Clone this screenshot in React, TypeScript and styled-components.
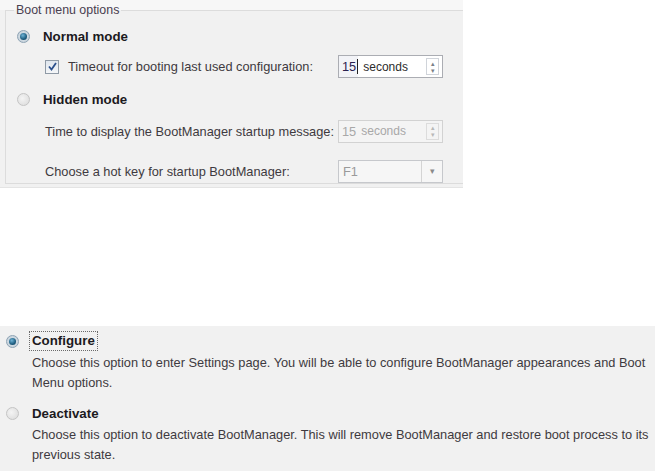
import styled, { createGlobalStyle } from "styled-components";

const GlobalStyle = createGlobalStyle`
  * {
    box-sizing: border-box;
  }
  body {
    margin: 0;
    background: #ffffff;
    font-family: "Liberation Sans", Arial, sans-serif;
    color: #3c3c3c;
  }
`;

function Radio({ checked }: { checked?: boolean }) {
  return (
    <RadioOuter $checked={checked}>
      {checked && <RadioDot />}
    </RadioOuter>
  );
}

function Check() {
  return (
    <CheckBox>
      <svg width="11" height="11" viewBox="0 0 11 11">
        <path d="M2 5.5 L4.5 8.5 L9 2" fill="none" stroke="#2a4f8c" strokeWidth="1.8" />
      </svg>
    </CheckBox>
  );
}

function Spin({ value, disabled }: { value: string; disabled?: boolean }) {
  return (
    <SpinBox $disabled={disabled}>
      <SpinNumber $disabled={disabled}>
        {value}
        {!disabled && <Caret />}
      </SpinNumber>
      <SpinUnit $disabled={disabled}>seconds</SpinUnit>
      <SpinArrows $disabled={disabled}>
        <span>▴</span>
        <span>▾</span>
      </SpinArrows>
    </SpinBox>
  );
}

function App() {
  return (
    <Page>
      <GlobalStyle />
      <TopPanel>
        <Group>
          <Legend>Boot menu options</Legend>
          <Row $top={11} $indent={3}>
            <Radio checked />
            <Heading>Normal mode</Heading>
          </Row>
          <Row $top={8} $indent={31} $tall>
            <Check />
            <Label $width={270}>Timeout for booting last used configuration:</Label>
            <Spin value="15" />
          </Row>
          <Row $top={11} $indent={3}>
            <Radio />
            <Heading>Hidden mode</Heading>
          </Row>
          <Row $top={10} $indent={31} $tall>
            <Label $width={293}>Time to display the BootManager startup message:</Label>
            <Spin value="15" disabled />
          </Row>
          <Row $top={16} $indent={31} $tall>
            <Label $width={293}>Choose a hot key for startup BootManager:</Label>
            <Combo>
              <ComboValue>F1</ComboValue>
              <ComboArrow>▾</ComboArrow>
            </Combo>
          </Row>
        </Group>
      </TopPanel>

      <BottomPanel>
        <Option>
          <Row $top={0} $indent={6}>
            <Radio checked />
            <FocusHeading>Configure</FocusHeading>
          </Row>
          <Description>
            Choose this option to enter Settings page. You will be able to configure BootManager appearances and Boot
            Menu options.
          </Description>
        </Option>
        <Option $top={10}>
          <Row $top={0} $indent={6}>
            <Radio />
            <Heading>Deactivate</Heading>
          </Row>
          <Description>
            Choose this option to deactivate BootManager. This will remove BootManager and restore boot process to its
            previous state.
          </Description>
        </Option>
      </BottomPanel>
    </Page>
  );
}

export default App;

const Page = styled.div`
  width: 655px;
  height: 471px;
  display: flex;
  flex-direction: column;
  font-size: 12.8px;
`;

const TopPanel = styled.div`
  width: 463px;
  height: 188px;
  background: linear-gradient(#f7f7f7 0, #f7f7f7 10px, #f1f1f1 10px);
  border-bottom: 1px solid #e4e4e4;
  padding: 4px 0 0 5px;
`;

const Group = styled.fieldset`
  margin: 0;
  height: 180px;
  border: 1px solid #dcdcdc;
  border-right: none;
  padding: 0 0 0 8px;
  display: flex;
  flex-direction: column;
`;

const Legend = styled.legend`
  padding: 0 2px;
  font-size: 12.4px;
  color: #4a4050;
  line-height: 12px;
`;

const Row = styled.div<{ $top: number; $indent: number; $tall?: boolean }>`
  display: flex;
  align-items: center;
  height: ${(p) => (p.$tall ? 24 : 20)}px;
  margin-top: ${(p) => p.$top}px;
  padding-left: ${(p) => p.$indent}px;
`;

const RadioOuter = styled.span<{ $checked?: boolean }>`
  width: 13px;
  height: 13px;
  border-radius: 50%;
  border: 1px solid ${(p) => (p.$checked ? "#8ea3b4" : "#c4c4c4")};
  background: ${(p) =>
    p.$checked
      ? "radial-gradient(circle, #dbe6ee 0, #c2cdd6 100%)"
      : "radial-gradient(circle at 40% 40%, #f4f4f4 0, #d9d9d9 100%)"};
  display: flex;
  align-items: center;
  justify-content: center;
  flex-shrink: 0;
`;

const RadioDot = styled.span`
  width: 7px;
  height: 7px;
  border-radius: 50%;
  background: radial-gradient(circle at 40% 35%, #6fb3d6 0, #1d5d80 60%, #0f3a55 100%);
`;

const Heading = styled.span`
  margin-left: 13px;
  font-weight: bold;
  font-size: 13.3px;
  color: #1c1a1e;
`;

const FocusHeading = styled(Heading)`
  margin-left: 10px;
  border: 1px dotted #6a6a6a;
  padding: 1px 2px;
  line-height: 16px;
`;

const CheckBox = styled.span`
  width: 14px;
  height: 14px;
  border: 1px solid #8f9aa6;
  background: linear-gradient(#dfe6ee, #f4f6f8);
  display: flex;
  align-items: center;
  justify-content: center;
  margin-right: 9px;
  flex-shrink: 0;
`;

const Label = styled.span<{ $width: number }>`
  width: ${(p) => p.$width}px;
  flex-shrink: 0;
  color: #3e3a40;
`;

const SpinBox = styled.div<{ $disabled?: boolean }>`
  width: 105px;
  height: 23px;
  display: flex;
  align-items: stretch;
  border: 1px solid ${(p) => (p.$disabled ? "#d2d2d2" : "#abadb3")};
  background: ${(p) => (p.$disabled ? "#f4f4f4" : "#ffffff")};
`;

const SpinNumber = styled.span<{ $disabled?: boolean }>`
  display: flex;
  align-items: center;
  padding-left: 3px;
  color: ${(p) => (p.$disabled ? "#a8a8a8" : "#2a2250")};
  background: ${(p) => (p.$disabled ? "transparent" : "#f2f3f7")};
`;

const Caret = styled.span`
  width: 1px;
  height: 15px;
  background: #222222;
  margin-left: 1px;
`;

const SpinUnit = styled.span<{ $disabled?: boolean }>`
  flex: 1;
  display: flex;
  align-items: center;
  padding-left: 5px;
  font-size: 12px;
  color: ${(p) => (p.$disabled ? "#a8a8a8" : "#2c2c2c")};
`;

const SpinArrows = styled.span<{ $disabled?: boolean }>`
  width: 13px;
  margin: 2px 3px 2px 0;
  border: 1px solid ${(p) => (p.$disabled ? "#dcdcdc" : "#d0d4da")};
  display: flex;
  flex-direction: column;
  align-items: center;
  justify-content: center;
  font-size: 7px;
  line-height: 7px;
  color: ${(p) => (p.$disabled ? "#b8b8b8" : "#7a8088")};
`;

const Combo = styled.div`
  width: 105px;
  height: 23px;
  display: flex;
  border: 1px solid #c6c8cc;
  background: #f6f6f6;
`;

const ComboValue = styled.span`
  flex: 1;
  display: flex;
  align-items: center;
  padding-left: 4px;
  color: #9a9a9a;
`;

const ComboArrow = styled.span`
  width: 21px;
  border-left: 1px solid #d4d4d4;
  display: flex;
  align-items: center;
  justify-content: center;
  font-size: 9px;
  color: #8a8a8a;
`;

const BottomPanel = styled.div`
  margin-top: 138px;
  flex: 1;
  background: #f1f1f1;
  padding-top: 5px;
`;

const Option = styled.div<{ $top?: number }>`
  margin-top: ${(p) => p.$top ?? 0}px;
`;

const Description = styled.p`
  margin: 2px 0 0 32px;
  width: 622px;
  line-height: 20px;
  color: #3e3a40;
`;
